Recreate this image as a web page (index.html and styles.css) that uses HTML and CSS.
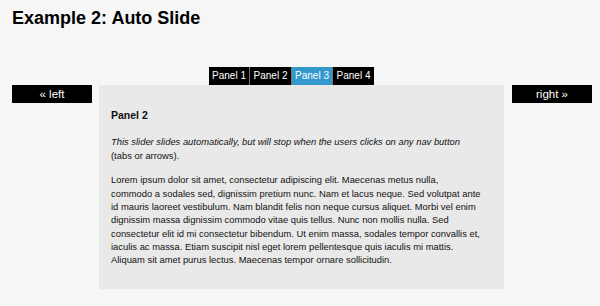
FILE: index.html
```html
<!DOCTYPE html>
<html>
<head>
<meta charset="utf-8">
<link rel="stylesheet" href="styles.css">
</head>
<body>
<h1 class="title">Example 2: Auto Slide</h1>
<div class="slider">
  <ul class="tabs">
    <li class="tab">Panel 1</li>
    <li class="tab">Panel 2</li>
    <li class="tab active">Panel 3</li>
    <li class="tab">Panel 4</li>
  </ul>
  <div class="stage">
    <a class="arrow">« left</a>
    <div class="panel">
      <h2 class="panel-title">Panel 2</h2>
      <p class="intro"><em>This slider slides automatically, but will stop when the users clicks on any nav button</em><br>(tabs or arrows).</p>
      <p class="body">Lorem ipsum dolor sit amet, consectetur adipiscing elit. Maecenas metus nulla,<br>commodo a sodales sed, dignissim pretium nunc. Nam et lacus neque. Sed volutpat ante<br>id mauris laoreet vestibulum. Nam blandit felis non neque cursus aliquet. Morbi vel enim<br>dignissim massa dignissim commodo vitae quis tellus. Nunc non mollis nulla. Sed<br>consectetur elit id mi consectetur bibendum. Ut enim massa, sodales tempor convallis et,<br>iaculis ac massa. Etiam suscipit nisl eget lorem pellentesque quis iaculis mi mattis.<br>Aliquam sit amet purus lectus. Maecenas tempor ornare sollicitudin.</p>
    </div>
    <a class="arrow">right »</a>
  </div>
</div>
</body>
</html>
```
FILE: styles.css
```css
html, body {
  margin: 0;
  padding: 0;
  background: #f6f6f6;
}
body {
  font-family: "Liberation Sans", Arial, sans-serif;
  color: #000;
  padding: 8px 8px 0 12px;
}
.title {
  margin: 0;
  font-size: 18px;
  line-height: 21px;
  font-weight: bold;
}
.slider {
  margin-top: 38px;
}
.tabs {
  list-style: none;
  margin: 0 0 0 197px;
  padding: 0;
  display: flex;
  gap: 1px;
  height: 18px;
  background: #777;
  width: max-content;
}
.tab {
  background: #000;
  color: #fff;
  font-size: 10px;
  line-height: 18px;
  width: 40px;
  text-align: center;
}
.tab:nth-child(2), .tab:nth-child(4) {
  width: 41px;
}
.tab.active {
  background: #3399cc;
}
.stage {
  display: flex;
  align-items: flex-start;
  gap: 7px;
}
.arrow {
  display: block;
  flex: none;
  width: 80px;
  height: 18px;
  background: #000;
  color: #fff;
  font-size: 11.5px;
  line-height: 18px;
  text-align: center;
}
.stage .arrow:last-child {
  margin-left: 1px;
}
.panel {
  flex: none;
  width: 381px;
  height: 180px;
  padding: 12px;
  background: #e9e9e9;
  color: #111;
  font-size: 9.4px;
  line-height: 13.3px;
}
.intro, .body {
  white-space: nowrap;
}
.panel-title {
  margin: 0;
  padding-top: 12px;
  font-size: 10.5px;
  font-weight: bold;
  line-height: 13px;
}
.intro {
  margin: 13.4px 0 0 0;
}
.body {
  margin: 11.4px 0 0 0;
}
```
